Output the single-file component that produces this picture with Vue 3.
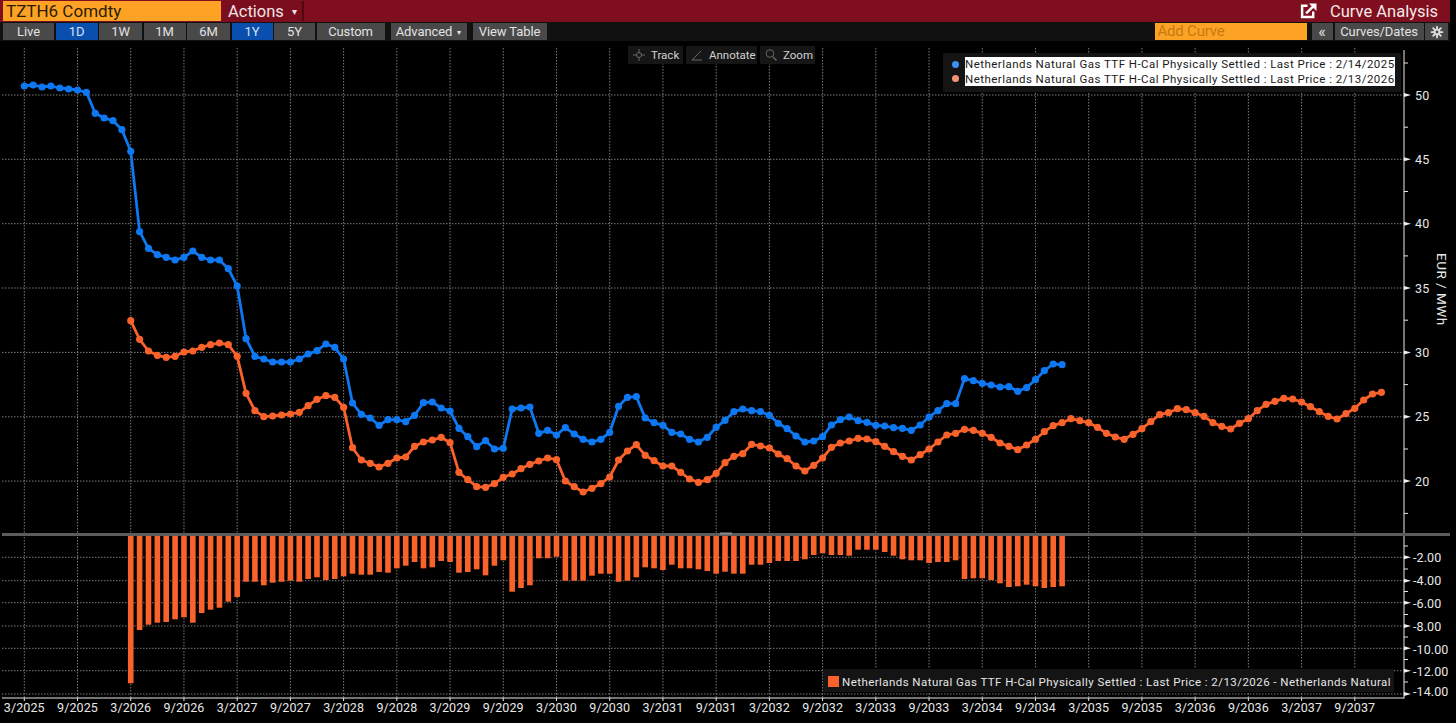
<script setup>
const xAt = (i) => +(24.3 + 8.87 * i).toFixed(2)

const blueY = [86,85,87,86,88,89,90,92.3,113.3,118,120.7,129.7,151.3,231.7,248.3,254.7,257.3,260,257.3,251,257.3,260,260,268.7,286,338.7,356.3,359,362,362,362,359,354,350.7,344,347.3,359,403,414.3,418,425.3,419.7,419.7,421.7,415.3,402.7,402,408,411,428.3,436.7,446.7,440.7,449,448.3,409,408,407,433.3,430.3,435,427.7,434,439.3,442,439.3,432.3,406.3,397.3,396.7,418,422.7,425.3,432.3,434,439.3,442,437.3,427.3,420.3,411.7,409,410.7,411.7,415.3,423.3,428.7,436,442,441,436.7,425,419.7,417,420.7,422.3,425.3,426,427.7,428.3,430.3,425,417,410.7,403.7,403.7,378.7,380.7,383.3,385,387,386.7,391.3,387.7,379.7,370.7,364,364.7]

const orangeStart = 12
const orangeY = [320.7,339.3,351,355.3,357.3,356.3,352,351,347.3,344.7,343,344.7,356.3,393.3,410.7,416.7,416,415,414,412.3,405.7,399.3,395.7,397.3,407.3,447.7,460,463.3,467,463.3,458,457,446.3,442,440,437.3,442.7,472.3,479.7,486.7,487.3,483.7,477.3,474,468.7,464.3,461,458,459.7,481,486.7,492,488.3,483.7,477,460,451,444.7,455.3,460.7,466,466,472.3,479,482.3,479.7,473.3,462.7,456.3,453.7,444.3,446,448,454,458.7,466,471,465.3,458,447.3,443,441,438.3,439,441.7,446.3,451.7,456.3,460,454.7,449,442,435,433.3,429.3,430.3,433.3,437.3,443,446.3,449.7,445,439.3,431.7,425.7,422.7,418.7,420.7,422.7,427.3,433.3,437,439.3,434.3,428.7,421.7,414.7,412.7,408.7,409.7,412.7,416.3,422.7,426.3,429,423.3,418.7,410.7,404.3,401.3,398.3,399,402,406.7,411.7,416.3,419,413.7,408.3,400,394,392.3]

const barBottoms = [683.3,630,624.7,622.7,622,619.3,617.3,622.7,613,609.7,607.7,601.7,597,581.7,581.7,585.3,582.7,581.7,580.7,581.7,579,577.3,580,579,576.3,573.7,574.7,574.7,572,572.7,568.3,565.7,562,568.3,567.3,561,562,572.7,572,569.3,575.3,565.7,560.3,591.7,588,585.3,558.3,558.3,556.7,580.7,580.7,580.7,575.7,573.7,573.7,581.7,580.7,577.3,567.3,568.3,570,564.7,568.3,568.3,569.3,571,573.7,571.7,573.7,573.7,564.7,564.7,563,561,561,561,559.3,555,553.3,555,555,555.7,549.7,549.7,549.7,552,555.7,559.3,560.3,560.3,563,562,562,560.3,579,578.3,578.3,580,583.3,587,586.3,584.7,586.3,588,587,586.3]

const bluePts = blueY.map((y, i) => ({ x: xAt(i), y }))
const orangePts = orangeY.map((y, i) => ({ x: xAt(i + orangeStart), y }))
const toPoly = (pts) => pts.map((p) => `${p.x},${p.y}`).join(' ')
const bluePoly = toPoly(bluePts)
const orangePoly = toPoly(orangePts)
const bars = barBottoms.map((b, i) => ({ x: xAt(i + orangeStart) - 2.8, h: b - 536 }))

const dateLabels = []
for (let i = 0; i <= 150; i += 6) {
  const m = i % 12 === 0 ? 3 : 9
  dateLabels.push({ x: xAt(i), text: `${m}/${2025 + Math.floor(i / 12)}` })
}

const priceTicks = [50, 45, 40, 35, 30, 25, 20].map((v) => ({
  label: v,
  y: +(95 + (50 - v) * 12.87).toFixed(1),
}))
const priceMinor = [63, 127.2, 191.5, 255.9, 320.2, 384.6, 449, 513.4]
const diffTicks = [
  { label: '-2.00', y: 557.3, ty: 557.3 },
  { label: '-4.00', y: 580.7, ty: 580.7 },
  { label: '-6.00', y: 602.7, ty: 603 },
  { label: '-8.00', y: 626, ty: 626 },
  { label: '-10.00', y: 648.3, ty: 649 },
  { label: '-12.00', y: 670.7, ty: 671 },
  { label: '-14.00', y: 694, ty: 691 },
]
const diffMinor = [546, 569, 591.5, 614.5, 637, 659.5, 682]
const ranges = [
  { t: 'Live' }, { t: '1D', on: true }, { t: '1W' }, { t: '1M' },
  { t: '6M' }, { t: '1Y', on: true }, { t: '5Y' }, { t: 'Custom' },
]
const legendText = 'Netherlands Natural Gas TTF H-Cal Physically Settled : Last Price : '
</script>

<template>
  <div class="app">
    <header class="titlebar">
      <div class="ticker">TZTH6 Comdty</div>
      <div class="actions">Actions <span class="caret">▾</span></div>
      <div class="spacer"></div>
      <svg class="popout" width="17" height="16" viewBox="0 0 18 17">
        <path d="M8 3H2.2v11.8H14V9" fill="none" stroke="#fff" stroke-width="2.6" />
        <path d="M6.5 11 13.5 4" fill="none" stroke="#fff" stroke-width="2.6" />
        <path d="M9.5 0.5h8v8z" fill="#fff" />
      </svg>
      <div class="screen-name">Curve Analysis</div>
    </header>

    <nav class="toolbar">
      <div class="ranges">
        <button v-for="r in ranges" :key="r.t" class="btn" :class="{ active: r.on }">{{ r.t }}</button>
      </div>
      <button class="btn advanced">Advanced <span class="caret small">▾</span></button>
      <button class="btn view-table">View Table</button>
      <div class="spacer"></div>
      <div class="add-curve">Add Curve</div>
      <button class="btn collapse">«</button>
      <button class="btn curves">Curves/Dates</button>
      <button class="btn gear">
        <svg width="14" height="14" viewBox="0 0 16 16">
          <g stroke="#ddd" stroke-width="2">
            <path d="M8 1v14M1 8h14M3 3l10 10M13 3 3 13" />
          </g>
          <circle cx="8" cy="8" r="4" fill="#ddd" />
          <circle cx="8" cy="8" r="1.6" fill="#494949" />
        </svg>
      </button>
    </nav>

    <main class="chart">
      <svg class="plot" width="1456" height="679" viewBox="0 44 1456 679">
        <!-- grid -->
        <g class="grid">
          <line v-for="d in dateLabels" :key="'v' + d.text" :x1="d.x" :x2="d.x" y1="48" y2="698" />
          <line v-for="t in priceTicks" :key="'h' + t.label" x1="2" x2="1404" :y1="t.y" :y2="t.y" />
          <line v-for="t in diffTicks" :key="'d' + t.label" x1="2" x2="1404" :y1="t.y" :y2="t.y" />
        </g>

        <!-- bars -->
        <rect v-for="(b, i) in bars" :key="'b' + i" class="bar" :x="b.x" y="536" width="5.6" :height="b.h" />

        <!-- panel divider -->
        <rect x="2" y="533" width="1448" height="3" fill="#5c5c5c" />
        <rect x="720" y="532.5" width="12" height="2" fill="#8a8a8a" />

        <!-- curves -->
        <polyline class="curve orange" :points="orangePoly" />
        <circle v-for="(p, i) in orangePts" :key="'o' + i" class="dot-o" :cx="p.x" :cy="p.y" r="3.6" />
        <polyline class="curve blue" :points="bluePoly" />
        <circle v-for="(p, i) in bluePts" :key="'l' + i" class="dot-b" :cx="p.x" :cy="p.y" r="3.6" />

        <!-- axes -->
        <g class="axis">
          <line x1="1404" x2="1404" y1="50" y2="533" />
          <line x1="1404" x2="1404" y1="536" y2="698.5" />
          <line x1="2" x2="1404" y1="698" y2="698" />
          <line v-for="d in dateLabels" :key="'x' + d.text" :x1="d.x" :x2="d.x" y1="698" y2="701" />
          <line v-for="y in priceMinor" :key="'pm' + y" x1="1404" x2="1408" :y1="y" :y2="y" />
          <line v-for="y in diffMinor" :key="'dm' + y" x1="1404" x2="1408" :y1="y" :y2="y" />
        </g>
        <polygon v-for="t in priceTicks" :key="'pt' + t.label" fill="#eee"
          :points="`1404,${t.y - 2} 1411,${t.y} 1404,${t.y + 2}`" />
        <polygon v-for="t in diffTicks" :key="'dt' + t.label" fill="#eee"
          :points="`1404,${t.y - 2} 1411,${t.y} 1404,${t.y + 2}`" />

        <!-- labels -->
        <text v-for="t in priceTicks" :key="'pl' + t.label" class="label" x="1415" :y="t.y + 4.5">{{ t.label }}</text>
        <text v-for="t in diffTicks" :key="'dl' + t.label" class="label" x="1413" :y="t.ty + 4.5">{{ t.label }}</text>
        <text v-for="d in dateLabels" :key="'tl' + d.text" class="label mid" :x="d.x" y="711.5">{{ d.text }}</text>
        <text class="label unit" transform="translate(1437 253) rotate(90)">EUR / MWh</text>
      </svg>

      <div class="chart-tools">
        <div class="tool tool-track">
          <svg width="14" height="14" viewBox="0 0 14 14">
            <circle cx="7" cy="7" r="2.5" fill="none" stroke="#666" />
            <path d="M7 1v4M7 9v4M1 7h4M9 7h4" stroke="#666" />
          </svg>
          Track
        </div>
        <div class="tool tool-annotate">
          <svg width="14" height="14" viewBox="0 0 14 14">
            <path d="M2 12 11 3M2 12h10" fill="none" stroke="#666" />
          </svg>
          Annotate
        </div>
        <div class="tool tool-zoom">
          <svg width="14" height="14" viewBox="0 0 14 14">
            <circle cx="6" cy="5.5" r="3.8" fill="none" stroke="#666" />
            <path d="M9 9l3.5 3.5" stroke="#666" stroke-width="1.4" />
          </svg>
          Zoom
        </div>
      </div>

      <div class="legend">
        <div class="legend-row">
          <span class="swatch sw-blue"></span><span class="legend-text">{{ legendText }}2/14/2025</span>
        </div>
        <div class="legend-row">
          <span class="swatch sw-orange"></span><span class="legend-text">{{ legendText }}2/13/2026</span>
        </div>
      </div>

      <div class="bar-legend">
        <span class="bar-swatch"></span>
        <span>Netherlands Natural Gas TTF H-Cal Physically Settled : Last Price : 2/13/2026 - Netherlands Natural</span>
      </div>
    </main>
  </div>
</template>

<style>
html, body { margin: 0; background: #000; overflow: hidden; }
</style>

<style scoped>
.app {
  width: 1456px;
  height: 723px;
  background: #000;
  font-family: Roboto, "Liberation Sans", sans-serif;
  color: #e6e6e6;
  overflow: hidden;
}
.spacer { flex: 1; }

.titlebar {
  height: 22px;
  box-sizing: border-box;
  margin-right: 6px;
  padding: 1px 0 1px 3px;
  display: flex;
  align-items: stretch;
  background: #7f0e1f;
}
.ticker {
  width: 218px;
  box-sizing: border-box;
  padding: 1px 0 0 3px;
  background: #fca326;
  color: #2e1c00;
  font-size: 17px;
  line-height: 19px;
}
.actions {
  width: 81px;
  margin-left: 2px;
  box-sizing: border-box;
  padding: 1px 0 0 5px;
  color: #f2e4e4;
  font-size: 16.5px;
  line-height: 19px;
  background: #7a0d1e;
  border-right: 2px solid #4f0812;
}
.caret { font-size: 10px; margin-left: 4px; vertical-align: 2px; }
.caret.small { font-size: 8px; margin-left: 2px; vertical-align: 1px; }
.popout { align-self: center; margin-right: 13px; }
.screen-name {
  color: #f4e8e8;
  font-size: 16.5px;
  line-height: 19px;
  padding: 1px 12px 0 0;
}

.toolbar {
  height: 19px;
  margin-bottom: 3px;
  margin-right: 6px;
  box-sizing: border-box;
  padding: 1px 2px 1px 3px;
  display: flex;
  align-items: stretch;
  background: #111;
}
.btn {
  border: 0;
  padding: 0;
  margin: 0;
  background: #494949;
  color: #e2e2e2;
  font: inherit;
  font-size: 13px;
  line-height: 17px;
  letter-spacing: -0.1px;
  text-align: center;
}
.btn.active { background: #0a4fae; color: #d5e2f5; }
.ranges {
  display: grid;
  grid-template-columns: 51px 42px 43px 42px 43px 41px 41px 68px;
  column-gap: 1.5px;
}
.advanced { width: 76px; margin-left: 6px; }
.view-table { width: 74px; margin-left: 6px; }
.add-curve {
  width: 152px;
  box-sizing: border-box;
  padding-left: 3px;
  background: #fca326;
  color: #c77a10;
  font-size: 15px;
  line-height: 17px;
  letter-spacing: -0.2px;
}
.collapse { width: 21px; margin-left: 5px; font-size: 16px; line-height: 15px; }
.curves { width: 89px; margin-left: 2px; }
.gear {
  width: 23px;
  margin-left: 1.5px;
  display: flex;
  align-items: center;
  justify-content: center;
}

.chart { position: relative; height: 679px; }
.plot { display: block; }
.grid line { stroke: #7a7a7a; stroke-width: 1; stroke-dasharray: 1.5 1.5; }
.bar { fill: #f9622a; }
.curve { fill: none; stroke-width: 2.8; stroke-linejoin: round; }
.curve.blue { stroke: #0d78f2; }
.curve.orange { stroke: #f9622a; }
.dot-b { fill: #0d78f2; }
.dot-o { fill: #f9622a; }
.axis line { stroke: #e8e8e8; stroke-width: 1; }
.label {
  fill: #e8e8e8;
  font-family: Roboto, "Liberation Sans", sans-serif;
  font-size: 12.5px;
  letter-spacing: 0.1px;
}
.label.mid { text-anchor: middle; }
.label.unit { font-size: 13.5px; letter-spacing: 0.5px; }

.chart-tools {
  position: absolute;
  left: 628px;
  top: 2px;
  height: 18px;
  display: flex;
  gap: 3px;
  font-size: 11.5px;
  color: #d2d2d2;
}
.tool {
  display: flex;
  align-items: center;
  gap: 5px;
  box-sizing: border-box;
  padding-left: 4px;
  background: #161616;
}
.tool-track { width: 55px; }
.tool-annotate { width: 71px; }
.tool-zoom { width: 55px; }

.legend {
  position: absolute;
  left: 943px;
  top: 9px;
  width: 458px;
  height: 39px;
  box-sizing: border-box;
  padding: 4px 0 0 9px;
  background: #141414;
}
.legend-row {
  display: flex;
  align-items: center;
  height: 14.5px;
}
.swatch {
  width: 7px;
  height: 7px;
  border-radius: 50%;
  margin-right: 6px;
}
.sw-blue { background: #3a92f2; }
.sw-orange { background: #f59470; }
.legend-text {
  width: 430px;
  background: #fff;
  color: #1a1a1a;
  font-size: 11.5px;
  line-height: 14.5px;
  letter-spacing: 0.46px;
  white-space: nowrap;
}

.bar-legend {
  position: absolute;
  left: 823px;
  top: 625px;
  width: 571px;
  height: 23px;
  box-sizing: border-box;
  padding: 2px 0 0 5px;
  display: flex;
  align-items: center;
  gap: 3px;
  background: #141414;
  color: #e6e6e6;
  font-size: 11.5px;
  letter-spacing: 0.44px;
  white-space: nowrap;
}
.bar-swatch {
  flex: none;
  width: 11px;
  height: 11px;
  background: #f9622a;
}
</style>
